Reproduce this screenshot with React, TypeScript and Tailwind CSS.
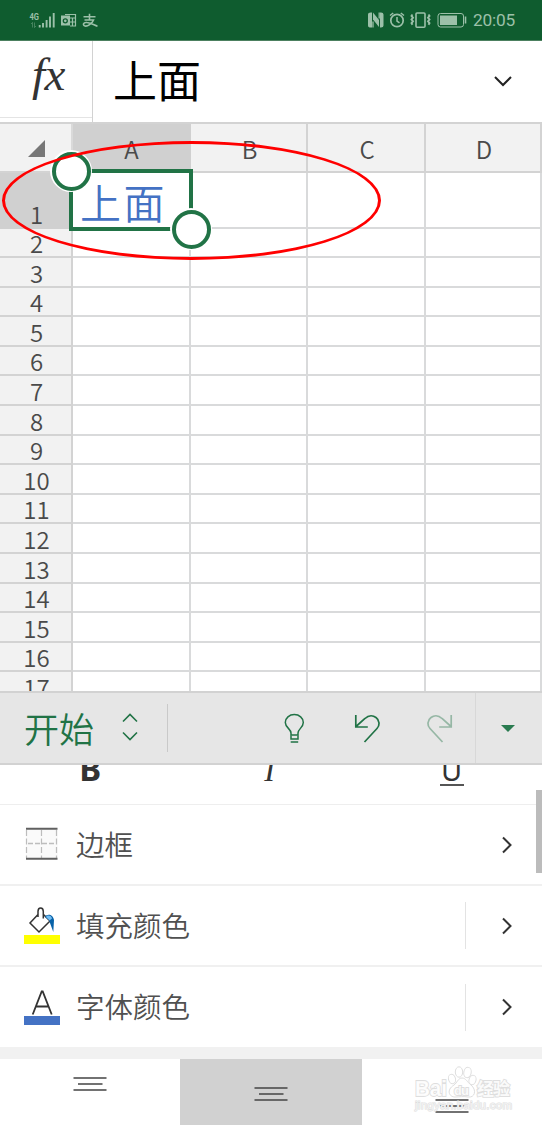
import React from "react";

const CJK = "font-['Noto_Sans_CJK_SC','Noto_Sans',sans-serif]";

function StatusBar() {
  return (
    <header className="flex h-[41px] shrink-0 items-center border-b border-[#4c8060] bg-[#0f5c2f] pl-[29px] pr-[27px] text-[#9cc0a9]">
      <svg className="h-[22px] w-[70px]" viewBox="29 9 70 22" fill="none" stroke="currentColor">
        <text x="29.500" y="19.500" fontSize="9" fontWeight="700" fontFamily="Roboto, sans-serif" fill="currentColor" stroke="none" textLength="9.500" lengthAdjust="spacingAndGlyphs">4G</text>
        <path d="M32.500 22.500v5M31 24l1.500-1.500M34.500 22.500v5l1.500-1.500" strokeWidth=".7" opacity=".55" />
        <path d="M39.700 25v2.500M43 23v4.500M46.600 20v7.500M50 16.500v11M53.700 13v14.500" strokeWidth="1.900" />
        <path d="M61 15.500h9v10h-9z" fill="currentColor" stroke="none" />
        <circle cx="65.300" cy="20.800" r="2" stroke="#0f5c2f" strokeWidth="1.300" />
        <path d="M65 14.500h10.500v11.500H70M70 18h5.500M70 22h5.500M72.500 18v8" strokeWidth="1.200" />
        <path d="M83.500 16.700h12M89.500 13.800v6M84.500 20h9c-1.500 4-6 6.500-8.500 6s-2-4 2-3.500c4 .4 7 2.500 10.500 3.700" strokeWidth="1.600" />
      </svg>
      <div className="flex-1" />
      <svg className="h-[22px] w-[102px]" viewBox="368 9 102 22" fill="none" stroke="currentColor">
        <path d="M373 12.500q-4-.5-4 2v11q0 2.500 4 2zM381 12.500q3.500-.5 3.500 2v11q0 2.500-3.500 2z" fill="currentColor" stroke="none" />
        <path d="M374 12.500l6 7.500v7l-6-7.500z" fill="currentColor" stroke="none" />
        <path d="M380.200 12.500v6M374 21.500v6" strokeWidth="1.300" />
        <circle cx="398" cy="20.500" r="6.200" strokeWidth="1.700" />
        <path d="M398 17v4l2.500 1.800M391 15.500l3.200-2.500M405 15.500l-3.200-2.500" strokeWidth="1.500" />
        <rect x="417" y="13" width="9" height="14.300" rx="1" strokeWidth="1.600" />
        <path d="M413.500 14.500l-1 1.400 1.500 1.800-1.500 1.800 1.500 1.800-1.500 1.800 1 1.700M429.500 14.500l1 1.400-1.500 1.800 1.500 1.800-1.500 1.800 1.500 1.800-1 1.700" strokeWidth="1.900" />
        <rect x="439" y="13.500" width="25.500" height="13.500" rx="2.500" strokeWidth="1" />
        <path d="M441 15.500h17v9.500h-17z" fill="currentColor" stroke="none" />
        <path d="M466.500 16.500v7" strokeWidth="1.600" />
      </svg>
      <span className="relative top-[1px] ml-[4px] font-['Roboto',sans-serif] text-[17.3px] leading-none tracking-[-0.2px]">20:05</span>
    </header>
  );
}

function FormulaBar() {
  return (
    <section className="flex h-[81px] shrink-0 bg-white">
      <div className="flex w-[93px] flex-col border-r border-[#d2d2d2]">
        <div className="h-[77px] border-b border-[#e4e4e4] pl-[32px] pt-[6px]">
          <span className="font-['Liberation_Serif',serif] text-[47px] italic leading-[54px] tracking-[-0.5px] text-[#333]">fx</span>
        </div>
      </div>
      <div className={`${CJK} flex-1 pl-[20px] pt-[6px] text-[44px] leading-[64px] text-black`}>上面</div>
      <svg className="mr-[29px] mt-[34px] h-3 w-5" viewBox="0 0 20 12" fill="none" stroke="#222" strokeWidth="2">
        <path d="M2 2l8 8 8-8" />
      </svg>
    </section>
  );
}

const columns = ["A", "B", "C", "D"];
const rows = Array.from({ length: 17 }, (_, i) => i + 1);

function Handle({ className }: { className: string }) {
  return (
    <div className={`absolute size-[42px] rounded-full bg-white p-[1.500px] ${className}`}>
      <div className="size-full rounded-full border-[4px] border-[#217346] bg-white" />
    </div>
  );
}

function Sheet() {
  return (
    <section className={`${CJK} relative h-[569px] shrink-0 font-[350] text-[#4a4a4a]`}>
      <div className="h-full overflow-hidden">
        <div className="grid h-[51px] grid-cols-[73px_118px_117px_118px_116px] border-y-2 border-[#d3d3d3] bg-[#f2f2f2] text-[24px] leading-[50px]">
          <div className="flex justify-end border-r-2 border-[#dadada] pr-[26px] pt-[16px]">
            <svg className="h-[17px] w-[17px]" viewBox="0 0 17 17"><path d="M17 0v17H0z" fill="#777" /></svg>
          </div>
          {columns.map((c) => (
            <div key={c} className={c === "A" ? "border-r-2 border-[#d0d0d0] bg-[#d0d0d0] pl-[1px] text-center" : "border-r-2 border-[#d3d3d3] pl-[2px] text-center"}>{c}</div>
          ))}
        </div>
        {rows.map((n) => (
          <div key={n} className={`${n === 1 ? "h-[55.500px]" : "h-[29.600px]"} grid grid-cols-[73px_118px_117px_118px_116px] grid-rows-[100%]`}>
            <div className={`${n === 1 ? "border-[#d0d0d0] bg-[#d0d0d0]" : "border-[#d3d3d3] bg-[#f2f2f2]"} flex items-end justify-center border-b-2 border-r-2 text-[24px] leading-[24px]`}>
              <span className="relative left-[1px] -top-[1px]">{n}</span>
            </div>
            {columns.map((c) => (
              <div key={c} className="border-b-2 border-r-2 border-[#d9dadb] bg-white">
                {n === 1 && c === "A" && <div className="whitespace-nowrap pl-[7px] pt-[3px] text-[41px] leading-[51px] tracking-[2.500px] text-[#4472c4]">上面</div>}
              </div>
            ))}
          </div>
        ))}
      </div>
      <div className="absolute left-[69px] top-[47px] h-[62px] w-[124px] border-4 border-[#217346]" />
      <Handle className="left-[50px] top-[28px]" />
      <Handle className="left-[170px] top-[86px]" />
      <div className="absolute left-[2px] top-[19px] h-[119px] w-[379px] rounded-[50%] border-[3px] border-[#ff0000]" />
    </section>
  );
}

function Toolbar() {
  return (
    <nav className="flex h-[74px] shrink-0 items-center border-y-2 border-[#d2d2d2] bg-[#e6e6e6] text-[#217346]">
      <span className={`${CJK} ml-[24px] w-[70px] whitespace-nowrap text-[35px] font-[350] leading-[60px]`}>开始</span>
      <svg className="ml-[27px] h-[30px] w-[18px]" viewBox="0 0 18 30" fill="none" stroke="currentColor" strokeWidth="1.600">
        <path d="M2 8.500L9 1.500l7 7M2 19.500l7 7 7-7" />
      </svg>
      <div className="ml-[28px] h-[48px] w-px bg-[#c9c9c9]" />
      <svg className="ml-[116px] h-[30px] w-[22px]" viewBox="284 713 22 30" fill="none" stroke="currentColor" strokeWidth="1.500">
        <path d="M291 735v-2c0-4-5.700-5.500-5.700-10.500a8.900 7.800 0 0 1 18 0c0 5-5.300 6.500-5.300 10.500v2z" />
        <path d="M291 735.500v3.500h7v-3.500M290.700 742h7.500" />
      </svg>
      <svg className="ml-[47px] h-[30px] w-[28px]" viewBox="353 713 28 30" fill="none" stroke="currentColor" strokeWidth="1.700">
        <path d="M355.800 715v12h12M356 726.500l9-8c4-4 8.500-3 11-1 4 3 3.800 8 1 11l-12.500 13.500" />
      </svg>
      <svg className="ml-[45px] h-[30px] w-[28px] opacity-40" viewBox="426 713 28 30" fill="none" stroke="currentColor" strokeWidth="1.700">
        <path d="M451.200 715v12h-12M451 726.500l-9-8c-4-4-8.500-3-11-1-4 3-3.800 8-1 11l12.500 13.500" />
      </svg>
      <div className="ml-[21px] h-full w-px bg-[#d8d8d8]" />
      <svg className="ml-[25px] h-[7px] w-[14px]" viewBox="0 0 14 7"><path d="M0 0h14L7 7z" fill="#2a7b50" /></svg>
    </nav>
  );
}

function BorderIcon() {
  return (
    <svg className="h-[36px] w-[36px]" viewBox="0 1 36 36" fill="none">
      <path d="M2 3h32v29H2z" fill="#fafafa" />
      <path d="M2.500 4v28M17.500 4v28M32.500 4v28" stroke="#bdbdbd" strokeWidth="1.200" strokeDasharray="6 2.500" />
      <path d="M4 17.500h28" stroke="#bdbdbd" strokeWidth="1.500" strokeDasharray="5 2" />
      <path d="M2 2.800h31.500M2 32.700h31.500" stroke="#606060" strokeWidth="2" />
    </svg>
  );
}

function FillIcon() {
  return (
    <svg className="h-[38px] w-[36px]" viewBox="24 907 36 38" fill="none">
      <path d="M24 935h36v9H24z" fill="#ff0" />
      <path d="M38 917v-5.500c0-2.200 1-3.500 2.600-3.500s2.700 1.300 2.700 3.500v7M38 914.500l-8 8.500 9 9 11-11-6.500-6.500" stroke="#333" strokeWidth="1.500" />
      <path d="M45 917c1.500-3.500 8-3.500 9 3l-.7 12-3.300-9-1-3z" fill="#0862a8" />
      <path d="M46 917c1.500-2.500 5.500-1.500 6 1.500l-2.500 2z" fill="#71bcf2" />
    </svg>
  );
}

function FontIcon() {
  return (
    <svg className="h-[38px] w-[36px]" viewBox="24 988 36 38" fill="none">
      <path d="M24 1016h36v9H24z" fill="#4472c4" />
      <path d="M32.700 1014.500l9-23h1l9 23M36 1006.500h12.500" stroke="#333" strokeWidth="1.800" />
    </svg>
  );
}

function OptionRow({ icon, label, split, last }: { icon: React.ReactNode; label: string; split?: boolean; last?: boolean }) {
  return (
    <div className={`flex shrink-0 items-center pl-[24px] ${last ? "h-[80px]" : "h-[81px] border-b-2 border-[#f0f0f0]"}`}>
      {icon}
      <span className={`${CJK} relative -top-[1px] ml-[16px] flex-1 text-[28.500px] font-[350] leading-[40px] text-[#505050]`}>{label}</span>
      {split && <div className="mr-[35px] h-[47px] w-px bg-[#e3e3e3]" />}
      <svg className="mr-[29px] h-[18px] w-[12px]" viewBox="0 0 12 18" fill="none" stroke="#333" strokeWidth="2">
        <path d="M2 1.500L9.500 9 2 16.500" />
      </svg>
    </div>
  );
}

function AlignIcon() {
  return (
    <svg className="h-[16px] w-[34px]" viewBox="0 0 34 16" stroke="#444" strokeWidth="1.600">
      <path d="M.5 2h33M5 8h24.500M.5 14h33" />
    </svg>
  );
}

function Watermark() {
  return (
    <svg className="absolute left-[412px] top-[1064px] h-[52px] w-[104px]" viewBox="412 1064 104 52" fill="#fff" fillOpacity=".9" stroke="#dedede" strokeWidth="1">
      <g>
        <ellipse cx="459" cy="1072" rx="3.700" ry="5.200" />
        <ellipse cx="467.500" cy="1072.500" rx="3.700" ry="5.200" transform="rotate(10 467.500 1072.500)" />
        <ellipse cx="452" cy="1079" rx="3.500" ry="4.800" transform="rotate(-15 452 1079)" />
        <ellipse cx="472.500" cy="1080" rx="3.500" ry="4.800" transform="rotate(15 472.500 1080)" />
        <path d="M462 1078c-4 0-5 5-8 7-8 5-5 12 1 12 4 0 9-1 13 0 7 1 9-7 3-12-4-3-5-7-9-7z" />
      </g>
      <g fontFamily="Liberation Sans, sans-serif" paintOrder="stroke" strokeWidth="1.800">
        <text x="415" y="1096" fontSize="22" fontWeight="700" textLength="32" lengthAdjust="spacingAndGlyphs">Bai</text>
        <text x="454" y="1094.500" fontSize="13" fontWeight="700" textLength="15">du</text>
        <text x="477" y="1095" fontSize="17" fontWeight="700" fontFamily="Noto Sans CJK SC, sans-serif" textLength="33">经验</text>
        <text x="415" y="1109" fontSize="11.500" textLength="97" strokeWidth="1.100" fillOpacity=".7">jingyan.baidu.com</text>
      </g>
    </svg>
  );
}

export default function App() {
  return (
    <main className="relative flex h-[1125px] w-[542px] flex-col overflow-hidden bg-white">
      <StatusBar />
      <FormulaBar />
      <Sheet />
      <Toolbar />
      <div className="grid h-[40px] shrink-0 grid-cols-3 overflow-hidden border-b border-[#eee] text-center text-[#333]">
        <div className="-mt-[11px] font-['Noto_Sans',sans-serif] text-[33px] font-bold leading-[30px]">B</div>
        <div className="-mt-[10px] pr-[3px] font-['Liberation_Serif',serif] text-[32px] italic leading-[30px]">I</div>
        <div className="-mt-[9px] flex justify-center font-['Noto_Sans',sans-serif] text-[29px] leading-[30px]">
          <span className="h-[30px] w-[24px] border-b-2 border-[#555]"><span className="relative -top-[1px]">U</span></span>
        </div>
      </div>
      <OptionRow icon={<BorderIcon />} label="边框" />
      <OptionRow icon={<FillIcon />} label="填充颜色" split />
      <OptionRow icon={<FontIcon />} label="字体颜色" split last />
      <div className="h-[12px] shrink-0 bg-[#f1f1f1]" />
      <div className="grid h-[66px] shrink-0 grid-cols-[180px_182px_180px]">
        <div className="flex justify-center pt-[17px]"><AlignIcon /></div>
        <div className="flex justify-center bg-[#d1d1d1] pt-[27px]"><AlignIcon /></div>
        <div className="flex justify-center pt-[39px]"><AlignIcon /></div>
      </div>
      <div className="absolute left-[536px] top-[790px] h-[83px] w-[6px] bg-[#bcbcbc]" />
      <Watermark />
    </main>
  );
}
